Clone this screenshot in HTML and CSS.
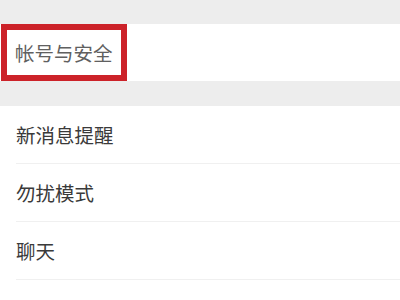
FILE: index.html
```html
<!DOCTYPE html>
<html lang="zh">
<head>
<meta charset="utf-8">
<link rel="stylesheet" href="styles.css">
</head>
<body>
<div class="band band-top"></div>
<div class="group">
  <div class="row row-account">
    <div class="highlight"><span class="label label-muted">帐号与安全</span></div>
  </div>
</div>
<div class="band band-mid"></div>
<div class="group">
  <div class="row"><span class="label">新消息提醒</span></div>
  <div class="row"><span class="label">勿扰模式</span></div>
  <div class="row"><span class="label">聊天</span></div>
</div>
</body>
</html>
```
FILE: styles.css
```css
html, body {
  margin: 0;
  padding: 0;
  background: #ffffff;
  font-family: "Noto Sans CJK SC", "Noto Sans", sans-serif;
}
.band {
  background: #ededed;
}
.band-top {
  height: 24px;
}
.band-mid {
  height: 25px;
}
.group {
  background: #ffffff;
}
.row {
  height: 57px;
  display: flex;
  align-items: center;
  margin-left: 16px;
  border-bottom: 1px solid #f0f0f0;
}
.row-account {
  margin-left: 0;
  border-bottom: none;
  height: 57px;
}
.highlight {
  box-sizing: border-box;
  margin-left: 1px;
  width: 126px;
  height: 100%;
  border: 6px solid #cc2229;
  display: flex;
  align-items: center;
  padding-left: 8px;
}
.label {
  font-size: 19.5px;
  color: #3a3a3a;
  line-height: 1;
}
.label-muted {
  color: #606060;
}
```
